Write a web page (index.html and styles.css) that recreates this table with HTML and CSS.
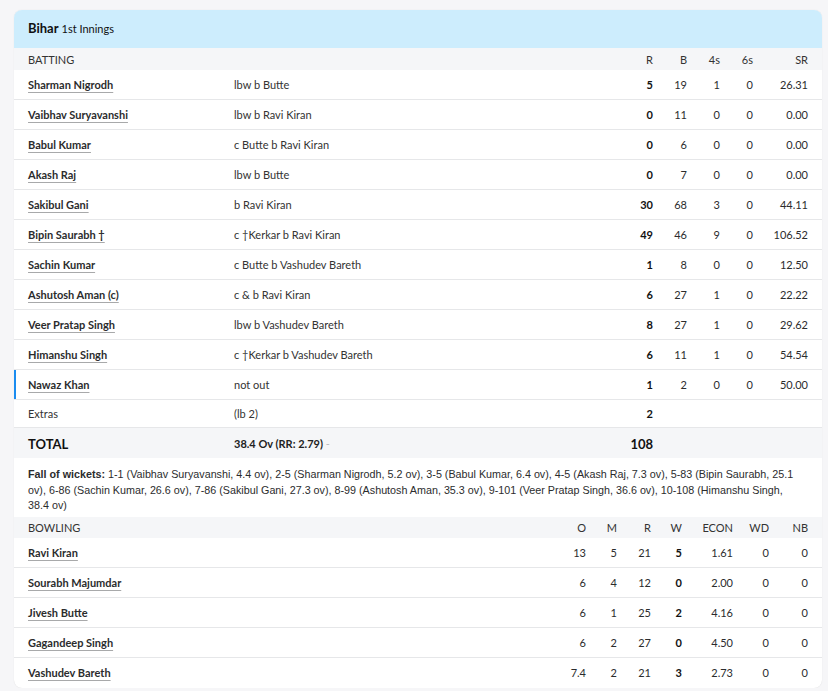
FILE: index.html
```html
<!DOCTYPE html>
<html>
<head>
<meta charset="utf-8">
<link rel="stylesheet" href="styles.css">
</head>
<body>
<div class="card">
  <div class="card-head"><span class="team">Bihar</span> <span class="inn">1st Innings</span></div>

  <div class="bat row head">
    <div>BATTING</div><div></div><div class="n">R</div><div class="n">B</div><div class="n">4s</div><div class="n">6s</div><div class="n">SR</div>
  </div>

  <div class="bat row"><div class="name">Sharman Nigrodh</div><div class="dis">lbw b Butte</div><div class="n b">5</div><div class="n">19</div><div class="n">1</div><div class="n">0</div><div class="n">26.31</div></div>
  <div class="bat row"><div class="name">Vaibhav Suryavanshi</div><div class="dis">lbw b Ravi Kiran</div><div class="n b">0</div><div class="n">11</div><div class="n">0</div><div class="n">0</div><div class="n">0.00</div></div>
  <div class="bat row"><div class="name">Babul Kumar</div><div class="dis">c Butte b Ravi Kiran</div><div class="n b">0</div><div class="n">6</div><div class="n">0</div><div class="n">0</div><div class="n">0.00</div></div>
  <div class="bat row"><div class="name">Akash Raj</div><div class="dis">lbw b Butte</div><div class="n b">0</div><div class="n">7</div><div class="n">0</div><div class="n">0</div><div class="n">0.00</div></div>
  <div class="bat row"><div class="name">Sakibul Gani</div><div class="dis">b Ravi Kiran</div><div class="n b">30</div><div class="n">68</div><div class="n">3</div><div class="n">0</div><div class="n">44.11</div></div>
  <div class="bat row"><div class="name">Bipin Saurabh †</div><div class="dis">c †Kerkar b Ravi Kiran</div><div class="n b">49</div><div class="n">46</div><div class="n">9</div><div class="n">0</div><div class="n">106.52</div></div>
  <div class="bat row"><div class="name">Sachin Kumar</div><div class="dis">c Butte b Vashudev Bareth</div><div class="n b">1</div><div class="n">8</div><div class="n">0</div><div class="n">0</div><div class="n">12.50</div></div>
  <div class="bat row"><div class="name">Ashutosh Aman (c)</div><div class="dis">c &amp; b Ravi Kiran</div><div class="n b">6</div><div class="n">27</div><div class="n">1</div><div class="n">0</div><div class="n">22.22</div></div>
  <div class="bat row"><div class="name">Veer Pratap Singh</div><div class="dis">lbw b Vashudev Bareth</div><div class="n b">8</div><div class="n">27</div><div class="n">1</div><div class="n">0</div><div class="n">29.62</div></div>
  <div class="bat row"><div class="name">Himanshu Singh</div><div class="dis">c †Kerkar b Vashudev Bareth</div><div class="n b">6</div><div class="n">11</div><div class="n">1</div><div class="n">0</div><div class="n">54.54</div></div>
  <div class="bat row notout"><div class="name">Nawaz Khan</div><div class="dis">not out</div><div class="n b">1</div><div class="n">2</div><div class="n">0</div><div class="n">0</div><div class="n">50.00</div></div>
  <div class="bat row extras"><div class="plain">Extras</div><div class="dis">(lb 2)</div><div class="n b">2</div><div></div><div></div><div></div><div></div></div>
  <div class="bat row total"><div class="tot">TOTAL</div><div class="ov">38.4 Ov (RR: 2.79) <span class="dash">-</span></div><div class="n tnum">108</div><div></div><div></div><div></div><div></div></div>

  <div class="fow"><b>Fall of wickets:</b> 1-1 (Vaibhav Suryavanshi, 4.4 ov), 2-5 (Sharman Nigrodh, 5.2 ov), 3-5 (Babul Kumar, 6.4 ov), 4-5 (Akash Raj, 7.3 ov), 5-83 (Bipin Saurabh, 25.1 ov), 6-86 (Sachin Kumar, 26.6 ov), 7-86 (Sakibul Gani, 27.3 ov), 8-99 (Ashutosh Aman, 35.3 ov), 9-101 (Veer Pratap Singh, 36.6 ov), 10-108 (Himanshu Singh, 38.4&nbsp;ov)</div>

  <div class="bowl row head">
    <div>BOWLING</div><div class="n">O</div><div class="n">M</div><div class="n">R</div><div class="n">W</div><div class="n">ECON</div><div class="n">WD</div><div class="n">NB</div>
  </div>
  <div class="bowl row"><div class="name">Ravi Kiran</div><div class="n">13</div><div class="n">5</div><div class="n">21</div><div class="n b">5</div><div class="n">1.61</div><div class="n">0</div><div class="n">0</div></div>
  <div class="bowl row"><div class="name">Sourabh Majumdar</div><div class="n">6</div><div class="n">4</div><div class="n">12</div><div class="n b">0</div><div class="n">2.00</div><div class="n">0</div><div class="n">0</div></div>
  <div class="bowl row"><div class="name">Jivesh Butte</div><div class="n">6</div><div class="n">1</div><div class="n">25</div><div class="n b">2</div><div class="n">4.16</div><div class="n">0</div><div class="n">0</div></div>
  <div class="bowl row"><div class="name">Gagandeep Singh</div><div class="n">6</div><div class="n">2</div><div class="n">27</div><div class="n b">0</div><div class="n">4.50</div><div class="n">0</div><div class="n">0</div></div>
  <div class="bowl row last"><div class="name">Vashudev Bareth</div><div class="n">7.4</div><div class="n">2</div><div class="n">21</div><div class="n b">3</div><div class="n">2.73</div><div class="n">0</div><div class="n">0</div></div>
</div>
</body>
</html>
```
FILE: styles.css
```css
* { box-sizing: border-box; }
html, body { margin: 0; padding: 0; }
body {
  background: #f6f6f8;
  font-family: "Lato", "Liberation Sans", sans-serif;
  color: #2b2c2d;
  padding: 10px 6px 0 14px;
}
.card {
  width: 808px;
  background: #fff;
  border-radius: 8px;
  box-shadow: 0 0 1px rgba(0,0,0,0.15);
  overflow: hidden;
}
.card-head {
  background: #cdedfd;
  height: 38px;
  padding: 0 14px 2px;
  display: flex;
  align-items: center;
  gap: 3px;
}
.team { font-weight: 700; font-size: 13px; color: #111; }
.inn { font-size: 11px; color: #111; }
.row {
  display: grid;
  align-items: center;
  padding: 0 14px;
  height: 30px;
  border-bottom: 1px solid #e6e7e9;
  font-size: 11px;
}
.bat { grid-template-columns: 206px 1fr 40px 34px 33px 33px 55px; }
.bowl { grid-template-columns: 1fr 40px 31px 34px 31px 51px 36px 39px; }
.row.head {
  height: 22px;
  background: #f5f6f8;
  border-bottom: none;
  font-size: 11px;
  color: #333;
}
.n { text-align: right; }
.b { font-weight: 700; color: #111; }
.name {
  font-weight: 700;
  color: #2b2c2d;
  text-decoration: underline;
  text-decoration-color: #a8a9aa;
  text-underline-offset: 3px;
  text-decoration-thickness: 1px;
}
.dis { color: #333; }
.notout { box-shadow: inset 2px 0 0 #1a8cf0; }
.extras { height: 28px; }
.plain { color: #333; }
.total {
  background: #f5f6f8;
  height: 30px;
  border-bottom: none;
}
.tot { font-weight: 700; font-size: 13px; color: #111; padding-top: 2px; }
.ov { font-weight: 700; font-size: 11px; color: #222; }
.dash { color: #bbb; font-weight: 400; }
.tnum { font-weight: 700; font-size: 13px; color: #111; padding-top: 2px; }
.fow {
  padding: 9px 14px 3px;
  font-family: "Liberation Sans", sans-serif;
  font-size: 10.75px;
  line-height: 15.5px;
  color: #2b2c2d;
}
.fow b { font-weight: 700; }
.bowl.head { height: 21px; }
.last { border-bottom: none; }
```
